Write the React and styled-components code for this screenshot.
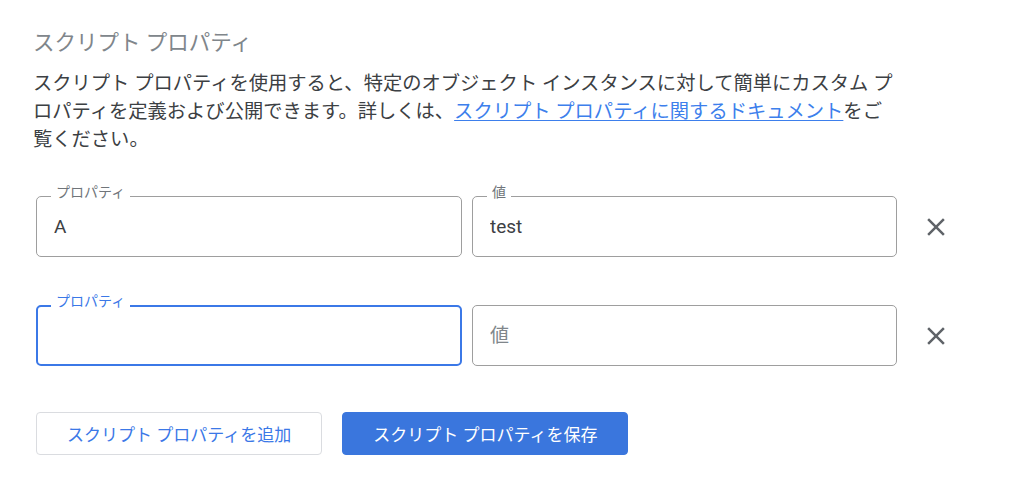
import React from "react";
import styled, { createGlobalStyle } from "styled-components";
import { MdClose } from "react-icons/md";

const GlobalStyle = createGlobalStyle`
  html, body {
    margin: 0;
    padding: 0;
    background: #ffffff;
  }
  body {
    font-family: Roboto, "Noto Sans CJK JP", sans-serif;
    color: #3c4043;
  }
  * { box-sizing: border-box; }
`;

const Page = styled.div`
  display: flex;
  flex-direction: column;
  padding: 30px 0 0 33px;
  width: 1024px;
  height: 485px;
`;

const Title = styled.h2`
  margin: 0;
  font-size: 21.5px;
  line-height: 26px;
  font-weight: 400;
  color: #80868b;
`;

const Description = styled.p`
  margin: 13.5px 0 0;
  width: 868px;
  font-size: 19.3px;
  line-height: 28px;
  color: #3c4043;
`;

const NoWrap = styled.span`
  white-space: nowrap;
`;

const DocLink = styled.a`
  color: #3d7fec;
  text-decoration: underline;
  text-underline-offset: 2px;
`;

const Rows = styled.div`
  display: flex;
  flex-direction: column;
  gap: 48px;
  margin: 42.5px 0 0 3px;
`;

const Row = styled.div`
  display: grid;
  grid-template-columns: 426px 425px 48px;
  column-gap: 10px;
  align-items: center;
`;

const Field = styled.div`
  position: relative;
  height: 61px;
`;

const Input = styled.input`
  width: 100%;
  height: 100%;
  margin: 0;
  padding: 0 ${(p) => (p.$focused ? 16 : 17)}px;
  border: ${(p) => (p.$focused ? "2px solid #3b78e7" : "1px solid #9e9e9e")};
  border-radius: 5px;
  outline: none;
  background: #fff;
  font-family: Roboto, "Noto Sans CJK JP", sans-serif;
  font-size: 19px;
  color: #3c4043;

  &::placeholder {
    color: #80868b;
  }
`;

const FloatLabel = styled.label`
  position: absolute;
  top: -12px;
  left: 15px;
  padding: 0 5px;
  background: #fff;
  font-size: 14px;
  line-height: 17px;
  color: ${(p) => (p.$focused ? "#3b78e7" : "#70757a")};
`;

const RemoveButton = styled.button`
  display: flex;
  align-items: center;
  justify-content: center;
  width: 48px;
  height: 48px;
  margin-left: 5px;
  padding: 0;
  border: none;
  background: transparent;
  color: #5f6368;
  cursor: pointer;
`;

const Actions = styled.div`
  display: flex;
  gap: 20px;
  margin: 46px 0 0 3px;
`;

const Button = styled.button`
  height: 43px;
  padding: 0 30px;
  border-radius: 4px;
  font-family: Roboto, "Noto Sans CJK JP", sans-serif;
  font-size: 17px;
  cursor: pointer;
  border: 1px solid ${(p) => (p.$primary ? "#3a76dd" : "#dadce0")};
  background: ${(p) => (p.$primary ? "#3a76dd" : "#ffffff")};
  color: ${(p) => (p.$primary ? "#ffffff" : "#3b78e7")};
`;

function PropField({ label, value, placeholder, focused }) {
  const showLabel = focused || (value && value.length > 0);
  return (
    <Field>
      {showLabel && <FloatLabel $focused={focused}>{label}</FloatLabel>}
      <Input
        $focused={focused}
        defaultValue={value}
        placeholder={showLabel ? "" : placeholder}
      />
    </Field>
  );
}

const rows = [
  { key: "A", value: "test", focused: false },
  { key: "", value: "", focused: true },
];

export default function App() {
  return (
    <>
      <GlobalStyle />
      <Page lang="ja">
        <Title>スクリプト プロパティ</Title>
        <Description>
          スクリプト プロパティを使用すると、特定のオブジェクト インスタンスに対して簡単にカスタム プロパティを定義および公開できます。詳しくは、
          <DocLink href="#">スクリプト プロパティに関するドキュメント</DocLink>
          をご<NoWrap>覧ください。</NoWrap>
        </Description>
        <Rows>
          {rows.map((r, i) => (
            <Row key={i}>
              <PropField
                label="プロパティ"
                value={r.key}
                placeholder="プロパティ"
                focused={r.focused}
              />
              <PropField label="値" value={r.value} placeholder="値" />
              <RemoveButton aria-label="削除">
                <MdClose size={30} />
              </RemoveButton>
            </Row>
          ))}
        </Rows>
        <Actions>
          <Button>スクリプト プロパティを追加</Button>
          <Button $primary>スクリプト プロパティを保存</Button>
        </Actions>
      </Page>
    </>
  );
}
